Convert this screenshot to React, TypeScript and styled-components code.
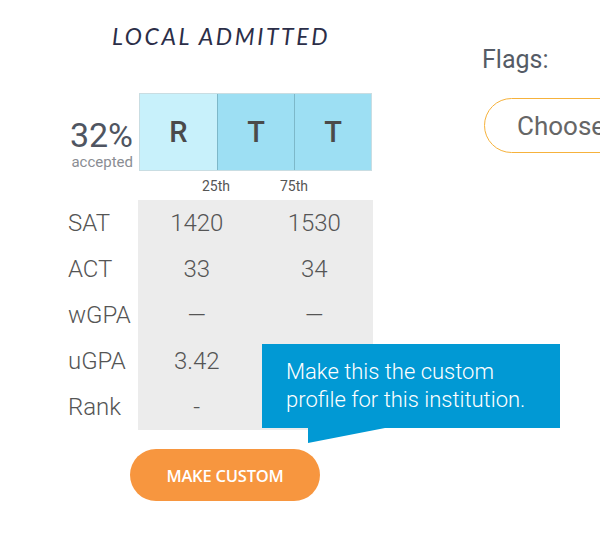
import React from 'react';
import styled, { createGlobalStyle } from 'styled-components';

const GlobalStyle = createGlobalStyle`
  body {
    margin: 0;
    background: #fff;
    font-family: Roboto, "Liberation Sans", sans-serif;
    overflow: hidden;
  }
`;

const Page = styled.div`
  display: flex;
  width: 600px;
  height: 533px;
  padding-left: 68px;
  box-sizing: border-box;
  overflow: hidden;
`;

const LeftColumn = styled.div`
  width: 414px;
  flex-shrink: 0;
  display: flex;
  flex-direction: column;
`;

const Title = styled.div`
  margin: 23px 0 0 44px;
  font-family: Lato, "Open Sans", sans-serif;
  font-style: italic;
  font-size: 23px;
  line-height: 27px;
  letter-spacing: 2.6px;
  color: #2b2e48;
  white-space: nowrap;
`;

const TopRow = styled.div`
  display: flex;
  align-items: flex-end;
  margin-top: 43px;
`;

const AcceptBlock = styled.div`
  width: 65px;
  margin-right: 6px;
  display: flex;
  flex-direction: column;
  align-items: flex-end;
`;

const Percent = styled.div`
  font-size: 34px;
  line-height: 36px;
  color: #4f5561;
`;

const AcceptedLabel = styled.div`
  font-size: 15px;
  line-height: 18px;
  color: #8a8d93;
`;

const TierBox = styled.div`
  display: grid;
  grid-template-columns: repeat(3, 1fr);
  width: 233px;
  height: 78px;
  border: 1px solid #c9dde2;
  box-sizing: border-box;
`;

const Tier = styled.div<{ $tone: 'light' | 'mid' }>`
  display: flex;
  align-items: center;
  justify-content: center;
  font-size: 29px;
  font-weight: 500;
  color: #4a4a4a;
  background: ${p => (p.$tone === 'light' ? '#c8f1fb' : '#9ddff3')};
  & + & {
    border-left: 1px solid #7db8c9;
  }
`;

const Percentiles = styled.div`
  display: flex;
  padding-left: 109px;
  height: 29px;
  align-items: center;
`;

const PercentileLabel = styled.span`
  width: 78px;
  text-align: center;
  font-size: 14px;
  color: #555;
`;

const Stats = styled.div`
  position: relative;
  display: flex;
`;

const LabelColumn = styled.div`
  width: 70px;
  display: flex;
  flex-direction: column;
`;

const RowLabel = styled.div`
  height: 46px;
  display: flex;
  align-items: center;
  font-size: 24px;
  font-weight: 300;
  color: #555;
  white-space: nowrap;
`;

const Panel = styled.div`
  width: 235px;
  background: #ececec;
  display: grid;
  grid-template-columns: 1fr 1fr;
  grid-auto-rows: 46px;
`;

const Value = styled.div`
  display: flex;
  align-items: center;
  justify-content: center;
  font-size: 24px;
  font-weight: 300;
  color: #555;
`;

const Tooltip = styled.div`
  position: absolute;
  left: 194px;
  top: 144px;
  width: 298px;
  height: 84px;
  box-sizing: border-box;
  padding: 14px 0 0 24px;
  background: #0199d4;
  color: #fff;
  font-size: 22px;
  font-weight: 300;
  line-height: 28px;
  white-space: nowrap;
`;

const TooltipTail = styled.svg`
  position: absolute;
  left: 46px;
  top: 84px;
`;

const MakeCustomButton = styled.button`
  margin: 19px 0 0 62px;
  width: 190px;
  height: 52px;
  border: none;
  border-radius: 26px;
  background: #f7963f;
  color: #fff;
  font-family: "Open Sans", sans-serif;
  font-size: 16.5px;
  font-weight: 600;
  letter-spacing: -0.2px;
  cursor: pointer;
`;

const RightColumn = styled.div`
  display: flex;
  flex-direction: column;
  padding-top: 46px;
`;

const FlagsLabel = styled.div`
  font-size: 25px;
  line-height: 28px;
  color: #555b66;
`;

const ChoosePill = styled.div`
  margin: 24px 0 0 2px;
  width: 170px;
  height: 55px;
  box-sizing: border-box;
  border: 1.5px solid #f6b23c;
  border-radius: 28px;
  display: flex;
  align-items: center;
  padding-left: 32px;
  font-size: 26px;
  color: #666;
  white-space: nowrap;
`;

const rows = [
  { label: 'SAT', low: '1420', high: '1530' },
  { label: 'ACT', low: '33', high: '34' },
  { label: 'wGPA', low: '—', high: '—' },
  { label: 'uGPA', low: '3.42', high: '' },
  { label: 'Rank', low: '-', high: '' },
];

const App: React.FC = () => {
  return (
    <>
      <GlobalStyle />
      <Page>
        <LeftColumn>
          <Title>LOCAL ADMITTED</Title>
          <TopRow>
            <AcceptBlock>
              <Percent>32%</Percent>
              <AcceptedLabel>accepted</AcceptedLabel>
            </AcceptBlock>
            <TierBox>
              <Tier $tone="light">R</Tier>
              <Tier $tone="mid">T</Tier>
              <Tier $tone="mid">T</Tier>
            </TierBox>
          </TopRow>
          <Percentiles>
            <PercentileLabel>25th</PercentileLabel>
            <PercentileLabel>75th</PercentileLabel>
          </Percentiles>
          <Stats>
            <LabelColumn>
              {rows.map(r => (
                <RowLabel key={r.label}>{r.label}</RowLabel>
              ))}
            </LabelColumn>
            <Panel>
              {rows.map(r => (
                <React.Fragment key={r.label}>
                  <Value>{r.low}</Value>
                  <Value>{r.high}</Value>
                </React.Fragment>
              ))}
            </Panel>
            <Tooltip>
              Make this the custom
              <br />
              profile for this institution.
              <TooltipTail width="78" height="16" viewBox="0 0 78 16">
                <polygon points="0,0 0,15 77,0" fill="#0199d4" />
              </TooltipTail>
            </Tooltip>
          </Stats>
          <MakeCustomButton>MAKE CUSTOM</MakeCustomButton>
        </LeftColumn>
        <RightColumn>
          <FlagsLabel>Flags:</FlagsLabel>
          <ChoosePill>Choose</ChoosePill>
        </RightColumn>
      </Page>
    </>
  );
};

export default App;
